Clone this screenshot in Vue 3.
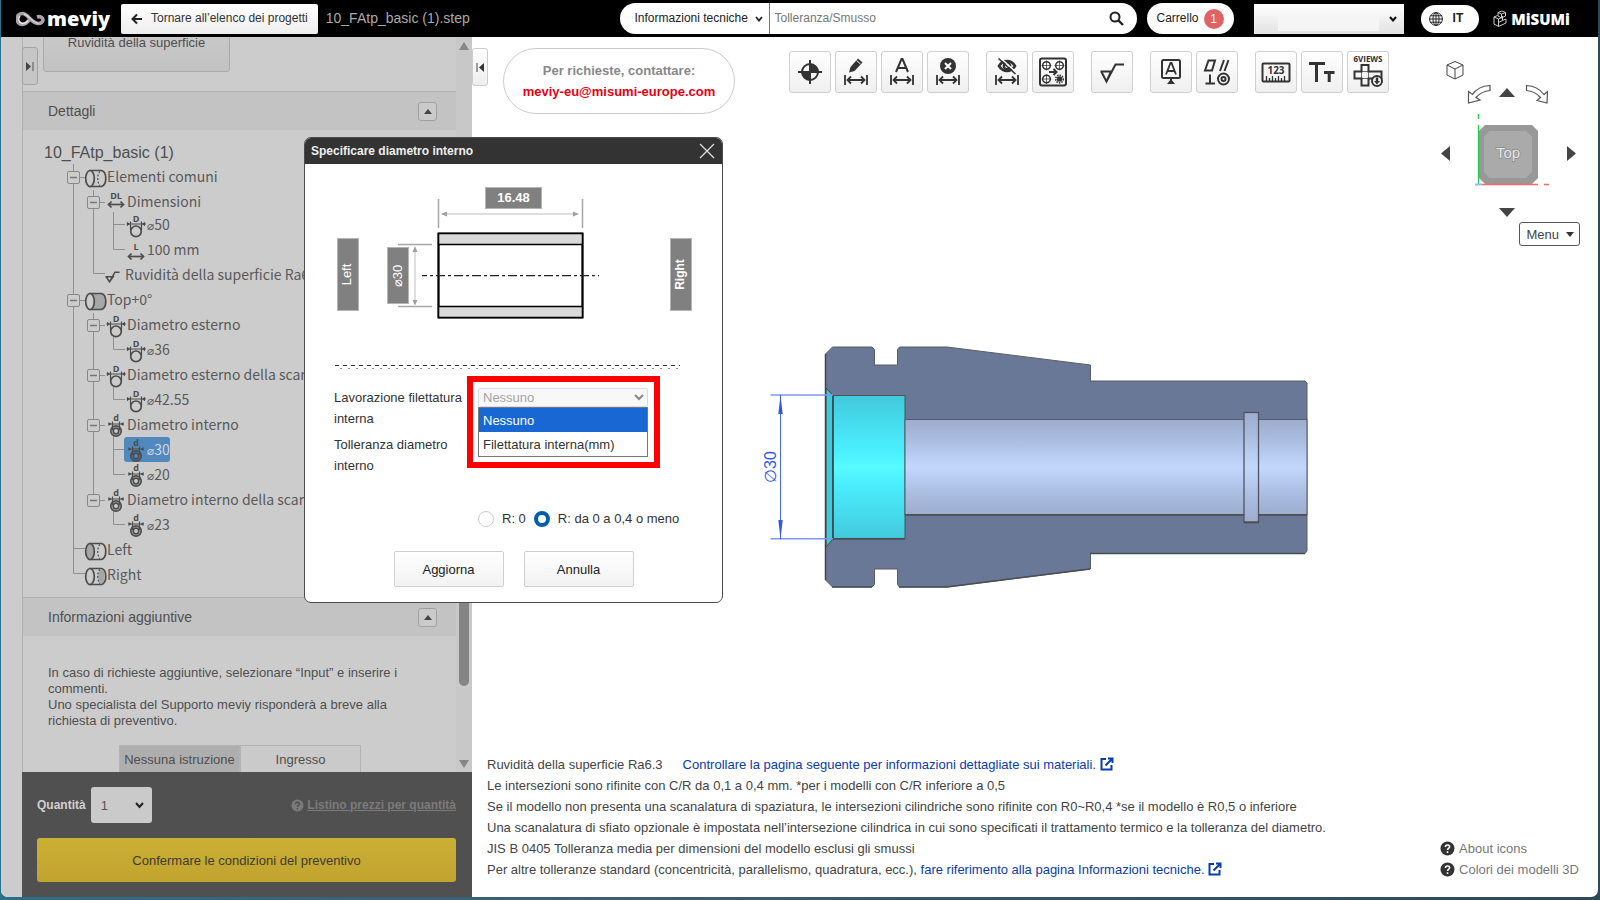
<script setup>
import { ref } from 'vue'

const rows = [
  { level: 1, icon: 'cyl', text: 'Elementi comuni' },
  { level: 2, icon: 'dl', text: 'Dimensioni', tight: true },
  { level: 3, icon: 'D', text: '⌀50' },
  { level: 3, icon: 'L', text: '100 mm' },
  { level: 2, icon: 'rough', text: 'Ruvidità della superficie Ra6.3' },
  { level: 1, icon: 'cyl-body', text: 'Top+0°' },
  { level: 2, icon: 'D', text: 'Diametro esterno' },
  { level: 3, icon: 'D', text: '⌀36' },
  { level: 2, icon: 'D', text: 'Diametro esterno della scanalatura' },
  { level: 3, icon: 'D', text: '⌀42.55' },
  { level: 2, icon: 'd', text: 'Diametro interno' },
  { level: 3, icon: 'd', text: '⌀30', selected: true },
  { level: 3, icon: 'd', text: '⌀20' },
  { level: 2, icon: 'd', text: 'Diametro interno della scanalatura' },
  { level: 3, icon: 'd', text: '⌀23' },
  { level: 1, icon: 'cyl-left', text: 'Left' },
  { level: 1, icon: 'cyl-right', text: 'Right' }
]

const toggles = [[50, 13], [70, 38], [50, 136], [70, 161], [70, 211], [70, 261], [70, 336]]

const toolGroups = [
  [['origin', 'Origine'], ['edit', 'Modifica quota'], ['auto', 'Quota automatica'], ['remove', 'Elimina quota']],
  [['hide', 'Nascondi quote'], ['holes', 'Gruppi di fori']],
  [['rough', 'Rugosità']],
  [['datum', 'Riferimento'], ['gtol', 'Tolleranze geometriche']],
  [['ruler', 'Misura'], ['text', 'Testo'], ['views', 'Sei viste']]
]

const threading = ref('Nessuno')
const options = ['Nessuno', 'Filettatura interna(mm)']
const corner = ref('r04')
const topic = ref('Informazioni tecniche')
const query = ref('')
const account = ref('')
const quantity = ref('1')
</script>

<template>
  <div class="desktop">
    <div class="window">
      <header class="topbar">
        <a class="brand" href="#" aria-label="meviy">
          <svg width="30" height="18" viewBox="0 0 30 18" fill="none">
            <path d="M14 9C11 13 9 14.500 6.500 14.500A5.500 5.500 0 0 1 6.500 3.500C12 3.500 15 13 22 13.500C25 13.600 27 12 27 10C27 7.500 24 6 21 7" stroke="#aaa4a8" stroke-width="3.600" />
            <path d="M12 10.500C10.500 13 9 13.500 6.500 13.500A4.500 4.500 0 0 1 4 6" stroke="#eee" stroke-width="1.300" />
            <path d="M8 4C13 5 16 13 23 13.500" stroke="#d8d4d8" stroke-width="1.300" />
          </svg>
          <span>meviy</span>
        </a>
        <button class="back" type="button">
          <svg width="12" height="12" viewBox="0 0 12 12" fill="none" stroke="#222" stroke-width="2"><path d="M11 6H2M6 1.500L1.500 6L6 10.500" /></svg>
          Tornare all’elenco dei progetti
        </button>
        <span class="filename">10_FAtp_basic (1).step</span>
        <form class="search" role="search" @submit.prevent>
          <span class="topic">
            <select v-model="topic" aria-label="Categoria"><option>Informazioni tecniche</option></select>
            <svg class="chev" width="8" height="6" viewBox="0 0 8 6" fill="none" stroke="#222" stroke-width="1.800"><path d="M1 1L4 4.500L7 1" /></svg>
          </span>
          <input v-model="query" type="text" placeholder="Tolleranza/Smusso" aria-label="Cerca">
          <button type="submit" aria-label="Avvia la ricerca">
            <svg width="15" height="15" viewBox="0 0 15 15" fill="none" stroke="#222"><circle cx="6" cy="6" r="4.500" stroke-width="2" /><path d="M9.500 9.500L14 14" stroke-width="2.400" /></svg>
          </button>
        </form>
        <button class="cart" type="button">Carrello <b>1</b></button>
        <span class="account">
          <select v-model="account" aria-label="Account"><option value=""></option></select>
          <i></i>
          <svg class="chev" width="8" height="6" viewBox="0 0 8 6" fill="none" stroke="#111" stroke-width="2"><path d="M1 1L4 4.500L7 1" /></svg>
        </span>
        <button class="lang" type="button">
          <svg width="14" height="14" viewBox="0 0 14 14" fill="none" stroke="#222" stroke-width="1"><circle cx="7" cy="7" r="6.400" /><ellipse cx="7" cy="7" rx="3" ry="6.400" /><path d="M7 .6V13.400M.6 7H13.400M1.500 3.800H12.500M1.500 10.200H12.500" /></svg>
          IT
        </button>
        <a class="misumi" href="#" aria-label="MiSUMi">
          <svg width="14" height="18" viewBox="0 0 14 18" fill="none" stroke="#ccc" stroke-width="1"><path d="M1 7L5.500 9V16.500L1 14ZM5.500 9L9.500 7M5.500 16.500L13 13V9L9.500 10.500V6M1 7L4.500 5.500M5 2.500L9 1L12.500 2.500L8.500 4ZM5 2.500V6L8.500 8V4M12.500 2.500V6L8.500 8M5.500 12.500L9.500 10.500" /></svg>
          <span>MiSUMi</span>
        </a>
      </header>

      <main class="body">
        <aside class="sidebar">
          <button class="fold" type="button" aria-label="Espandi il pannello"><svg width="8" height="9" viewBox="0 0 8 9"><path d="M0 0L5 4.500L0 9Z" fill="#444" /><path d="M7 0V9" stroke="#555" /></svg></button>
          <div class="scroller">
            <div class="content">
              <button class="panel-btn" type="button">Ruvidità della superficie</button>
              <section>
                <h2>Dettagli <button type="button" aria-label="Comprimi dettagli"><svg width="8" height="5" viewBox="0 0 8 5"><path d="M4 0L8 5H0Z" fill="#444" /></svg></button></h2>
                <div class="tree">
                  <p class="root">10_FAtp_basic (1)</p>
                  <div class="nodes">
                    <svg class="wires" width="160" height="425" viewBox="0 0 160 425" fill="none" stroke="#8f8f8f">
                      <path d="M50.500 0V409.500H62M50.500 384.500H62M50.500 13.500H62M50.500 136.500H62M70.500 26V109.500H82M70.500 38.500H82M70.500 149V336.500H82M70.500 161.500H82M70.500 211.500H82M70.500 261.500H82M90.500 48V85.500H102M90.500 60.500H102M90.500 172V185.500H102M90.500 222V235.500H102M90.500 272V310.500H102M90.500 285.500H102M90.500 347V360.500H102" />
                      <g v-for="(t, i) in toggles" :key="i">
                        <rect :x="t[0] - 5.5" :y="t[1] - 5.5" width="12" height="12" rx="1.500" fill="#ccc" stroke="#888" />
                        <path :d="`M${t[0] - 3} ${t[1] + 0.5}h7`" stroke="#777" stroke-width="1.500" />
                      </g>
                    </svg>
                    <ul>
                      <li v-for="(r, i) in rows" :key="i" :class="['lv' + r.level, { tight: r.tight }]">
                        <span class="node" :class="{ selected: r.selected, short: r.icon === 'rough' }">
                          <svg width="23" height="25" viewBox="0 0 23 25" fill="none" stroke="#4c4c4c" stroke-width="1.700">
                            <template v-if="r.icon.startsWith('cyl')">
                              <path d="M6 6.500H17.500C23.200 8 23.200 21 17.500 22.500H6Z" :fill="r.icon === 'cyl-body' ? '#a6a6a6' : 'none'" />
                              <path v-if="r.icon === 'cyl-right'" d="M17 7.300H18C21.500 9.500 21.500 19.500 18 21.700H16.500C13.500 19 13.500 10 17 7.300Z" fill="#a6a6a6" stroke="none" />
                              <ellipse cx="6" cy="14.500" rx="4.300" ry="8" :fill="r.icon === 'cyl-left' ? '#a6a6a6' : '#ccc'" />
                              <path v-if="r.icon !== 'cyl-body'" d="M16 7.500C13 10 13 19 16 21.500" stroke-width="1.200" stroke-dasharray="2 1.500" />
                            </template>
                            <template v-else-if="r.icon === 'D'">
                              <path d="M2.500 12H22M6.500 9.500V18M17.500 9.500V18" stroke-width="1.200" />
                              <path d="M3 9.800L6 12L3 14.200ZM21 9.800L18 12L21 14.200Z" fill="#4c4c4c" stroke="none" />
                              <circle cx="12" cy="19.300" r="5.300" />
                              <text x="12" y="9.500" text-anchor="middle">D</text>
                            </template>
                            <template v-else-if="r.icon === 'd'">
                              <path d="M4 12H20M8.500 9.500V18M15.500 9.500V18" stroke-width="1.200" />
                              <path d="M4.500 10L7.500 12L4.500 14ZM19.500 10L16.500 12L19.500 14Z" fill="#4c4c4c" stroke="none" />
                              <circle cx="12" cy="19" r="5.200" /><circle cx="12" cy="19" r="2.800" />
                              <text x="12" y="9" text-anchor="middle">d</text>
                            </template>
                            <template v-else-if="r.icon === 'rough'"><path d="M1.500 15H10L6 20.500L2.500 15M6 20.500L12 10H17" /></template>
                            <template v-else>
                              <path d="M5 15.500H19" :transform="r.icon === 'L' ? 'translate(0 4)' : null" />
                              <path d="M7.500 12.500L4.500 15.500L7.500 18.500M16.500 12.500L19.500 15.500L16.500 18.500" :transform="r.icon === 'L' ? 'translate(0 4)' : null" />
                              <text x="12" :y="r.icon === 'L' ? 13 : 10" text-anchor="middle">{{ r.icon.toUpperCase() }}</text>
                            </template>
                          </svg>
                          <span v-if="r.text[0] === '⌀'"><small>⌀</small>{{ r.text.slice(1) }}</span>
                          <span v-else>{{ r.text }}</span>
                        </span>
                      </li>
                    </ul>
                  </div>
                </div>
              </section>
              <section>
                <h2>Informazioni aggiuntive <button type="button" aria-label="Comprimi informazioni"><svg width="8" height="5" viewBox="0 0 8 5"><path d="M4 0L8 5H0Z" fill="#444" /></svg></button></h2>
                <p class="extra">In caso di richieste aggiuntive, selezionare “Input” e inserire i commenti.<br>Uno specialista del Supporto meviy risponderà a breve alla richiesta di preventivo.</p>
                <div class="segmented"><button class="on" type="button">Nessuna istruzione</button><button type="button">Ingresso</button></div>
              </section>
            </div>
            <div class="scrollbar">
              <svg width="10" height="8" viewBox="0 0 10 8"><path d="M5 0L10 8H0Z" fill="#858585" /></svg>
              <span></span>
              <svg width="10" height="8" viewBox="0 0 10 8"><path d="M5 8L10 0H0Z" fill="#858585" /></svg>
            </div>
          </div>
          <footer class="order">
            <div class="order-row">
              <label for="qty">Quantità</label>
              <span class="qty"><select id="qty" v-model="quantity"><option>1</option><option>2</option></select>
                <svg class="chev" width="9" height="7" viewBox="0 0 9 7" fill="none" stroke="#222" stroke-width="2"><path d="M1 1L4.500 5L8 1" /></svg></span>
              <a href="#"><svg width="13" height="13" viewBox="0 0 13 13"><circle cx="6.500" cy="6.500" r="6" fill="#7b7b7b" /><path d="M4.600 5.200C4.600 2.600 8.500 2.700 8.400 5C8.300 6.500 6.500 6.400 6.500 8M6.500 9V10.500" fill="none" stroke="#505050" stroke-width="1.500" /></svg><u>Listino prezzi per quantità</u></a>
            </div>
            <button class="confirm" type="button">Confermare le condizioni del preventivo</button>
          </footer>
        </aside>

        <section class="viewer">
          <div class="stage">
            <svg width="560" height="250" viewBox="755 342 560 250" role="img" aria-label="Sezione del modello">
              <defs>
                <linearGradient id="cy" x1="0" y1="0" x2="0" y2="1"><stop offset="0" stop-color="#42c9da" /><stop offset=".15" stop-color="#45d8ea" /><stop offset=".4" stop-color="#4bf0ff" /><stop offset=".5" stop-color="#57fbff" /><stop offset=".6" stop-color="#4bf0ff" /><stop offset=".85" stop-color="#45d8ea" /><stop offset="1" stop-color="#42c9da" /></linearGradient>
                <linearGradient id="bo" x1="0" y1="0" x2="0" y2="1"><stop offset="0" stop-color="#9dadce" /><stop offset=".2" stop-color="#a9bbdf" /><stop offset=".5" stop-color="#c3d7fd" /><stop offset=".8" stop-color="#a9bbdf" /><stop offset="1" stop-color="#9dadce" /></linearGradient>
              </defs>
              <path d="M825.500 354L832.500 347H872L874.500 349.500V365H897.500V349.500L899.500 347H947L1090.500 365V381H1305L1307 383V551L1305 553.500H1090.500V569L947 587H899.500L897.500 584.500V569H874.500V584.500L872 587H832.500L825.500 580Z" fill="#687896" stroke="#5a5d63" />
              <path d="M826 388L833 395.500V539L826 547Z" fill="#3bcbdc" stroke="#444" />
              <rect x="833" y="395.500" width="72" height="143" fill="url(#cy)" stroke="#4b5358" />
              <rect x="905" y="419.500" width="402" height="95" fill="url(#bo)" stroke="#555b68" />
              <rect x="1244" y="412.500" width="14.500" height="109.500" fill="url(#bo)" stroke="#4f5361" stroke-width="1.300" />
              <path d="M833 395V539M825.500 354V580" stroke="#40454a" stroke-width="1.500" />
              <path d="M905 515H1244M1258 515H1307M833 539H905M1244 522.500H1259M899 587H947L1090 569M832 587H872M1090 553.500H1305" fill="none" stroke="#4a4d52" stroke-width="1.500" />
              <path d="M770.500 395H833M770.500 538.800H833" stroke="#8196f5" stroke-width="1.600" />
              <path d="M780.500 395V539" stroke="#4a67ef" />
              <path d="M780.500 395L782.700 414H778.300ZM780.500 539L782.700 520H778.300Z" fill="#3258ee" />
              <text transform="translate(776 467) rotate(-90)" text-anchor="middle" font-size="16" fill="#3258ee">∅30</text>
            </svg>
          </div>

          <div class="viewer-top">
            <button class="collapse" type="button" aria-label="Comprimi il pannello"><svg width="8" height="9" viewBox="0 0 8 9"><path d="M8 0L3 4.500L8 9Z" fill="#333" /><path d="M1 0V9" stroke="#444" /></svg></button>
            <p class="contact">Per richieste, contattare:<a href="#">meviy-eu@misumi-europe.com</a></p>
            <div class="toolbar" role="toolbar">
              <div v-for="(g, gi) in toolGroups" :key="gi" class="tools">
                <button v-for="t in g" :key="t[0]" type="button" :aria-label="t[1]">
                  <svg width="40" height="40" viewBox="0 0 40 40" fill="none" stroke="#333" stroke-width="2">
                    <template v-if="t[0] === 'origin'">
                      <circle cx="20" cy="20" r="8" /><path d="M20 20V12A8 8 0 0 0 12 20ZM20 20V28A8 8 0 0 0 28 20Z" fill="#333" stroke="none" transform="translate(40 0) scale(-1 1)" /><path d="M20 8V32M8 20H32" />
                    </template>
                    <template v-else-if="['edit', 'auto', 'remove', 'hide'].includes(t[0])">
                      <path d="M9 23V33M31 23V33M12 28H28M15 24.500L11.500 28L15 31.500M25 24.500L28.500 28L25 31.500" stroke-width="1.800" />
                      <g v-if="t[0] === 'edit'"><path d="M13 20.500L14.500 15L22 6.500L26.500 10.500L18.500 19Z" fill="#333" stroke="none" /><path d="M20.500 8.500L24.500 12" stroke="#fff" stroke-width="1" /></g>
                      <path v-else-if="t[0] === 'auto'" d="M14 20L19.500 7H20.500L26 20M16 16H24" />
                      <g v-else-if="t[0] === 'remove'"><circle cx="20" cy="14" r="8" fill="#333" stroke="none" /><path d="M17 11L23 17M23 11L17 17" stroke="#fff" /></g>
                      <g v-else><path d="M12 14C16 7.500 24 7.500 28 14C24 20.500 16 20.500 12 14Z" stroke-width="2.600" /><circle cx="20" cy="14" r="3.200" stroke-width="2.400" /><path d="M13 5.500L30 21" stroke="#fff" stroke-width="1.500" /><path d="M11.500 6.500L28.500 22" stroke-width="1.600" /></g>
                    </template>
                    <template v-else-if="t[0] === 'holes'">
                      <rect x="7" y="6.500" width="26" height="27" rx="2" /><g stroke-width="1.500"><circle cx="13.500" cy="13.500" r="3.800" /><circle cx="26.500" cy="13.500" r="3.800" /><circle cx="13.500" cy="27" r="3.800" /><circle cx="26.500" cy="27" r="3.800" stroke-dasharray="1.500 1" /><circle cx="26.500" cy="27" r="2" fill="#333" /></g><path d="M8.500 13.500H18.500M21.500 13.500H31.500M13.500 8.500V18.500M26.500 8.500V18.500M8.500 27H18.500M13.500 22V32" stroke-width=".7" /><path d="M16 20H23M20.500 17L23.500 20L20.500 23" />
                    </template>
                    <path v-else-if="t[0] === 'rough'" d="M8.500 19.500H19L14.500 29.500L9.500 20M14.500 29.500L23.500 12.500H32" />
                    <template v-else-if="t[0] === 'datum'">
                      <rect x="11" y="8" width="18" height="18" rx="1.500" /><path d="M15 22.500L19.500 11H20.500L25 22.500M16.500 19H23.500" stroke-width="1.800" /><path d="M20 26V30" /><path d="M20 27L24 32H16Z" fill="#333" stroke="none" />
                    </template>
                    <template v-else-if="t[0] === 'gtol'">
                      <path d="M8 18.500L11.500 8.500H18L15 18.500ZM23 19L27 8M27.500 19L31.500 8M8.500 31.500H18M13 31V22.500" /><circle cx="26.500" cy="27" r="5.500" /><circle cx="26.500" cy="27" r="2" />
                    </template>
                    <template v-else-if="t[0] === 'ruler'">
                      <rect x="6.500" y="11.500" width="27" height="18" rx="1" /><path d="M10.500 29V24M13.500 29V26M16.500 29V24M19.500 29V26M22.500 29V24M25.500 29V26M28.500 29V24" stroke-width="1.300" /><text x="20" y="22" font-size="10" text-anchor="middle" class="lbl">123</text>
                    </template>
                    <template v-else-if="t[0] === 'text'"><path d="M7 11.500H23M14.500 11.500V30" stroke-width="3" /><path d="M22 20.500H32.500M27.200 20.500V30" stroke-width="3" /></template>
                    <template v-else>
                      <text x="20" y="10" font-size="8" text-anchor="middle" class="lbl">6VIEWS</text>
                      <path d="M13.500 19.500H20.500V26.500H13.500Z" stroke-width=".7" />
                      <path d="M13.500 13H20.500V19.500H33.500V26.500H20.500V33.500H13.500V26.500H6.500V19.500H13.500Z" stroke-width="2" />
                      <circle cx="29" cy="29" r="5" fill="#f4f4f4" /><path d="M29 32.500L26 29H27.800V25.500H30.200V29H32Z" fill="#333" stroke="none" />
                    </template>
                  </svg>
                </button>
              </div>
            </div>
            <div class="navigator">
              <div class="cube-pad">
                <svg width="140" height="160" viewBox="1440 60 140 160" fill="none">
                  <path d="M1455 61.500L1463 65V75L1455 79L1447 75V65ZM1447 65L1455 69L1463 65M1455 69V79" stroke="#444" />
                  <path d="M1490 85.500C1482 86 1476 89 1472.500 94.500L1468.500 91.500V103L1480 100L1476 97.500C1479 94 1484 91 1490 90.500ZM1526.500 85.500C1534.500 86 1540 89 1544 94.500L1547.500 91.500L1547 103L1537 100.500L1540.500 97.500C1537 93.500 1533 91 1526.500 90.500Z" stroke="#555" stroke-width="1.200" />
                  <path d="M1485 125H1532L1538 131V178L1532 184H1485L1479 178V131Z" fill="#989898" />
                  <path d="M1489 131H1526L1532 137V172L1526 178H1489L1484 172V137Z" fill="#aaa" />
                  <text x="1508" y="157.500" text-anchor="middle" font-size="15" fill="#e6e6e6" stroke="#8a8a8a" stroke-width="1.500" paint-order="stroke">Top</text>
                  <path d="M1478.500 114V119M1478.500 125V184" stroke="#24cc4c" stroke-width="1.300" />
                  <path d="M1482 184.500H1538M1544 184.500H1549" stroke="#f26a6a" stroke-width="1.500" /><path d="M1475 184.500H1482" stroke="#8fbdf5" stroke-width="2" />
                </svg>
                <button class="up" type="button" aria-label="Su"></button>
                <button class="left" type="button" aria-label="Sinistra"></button>
                <button class="right" type="button" aria-label="Destra"></button>
                <button class="down" type="button" aria-label="Giù"></button>
              </div>
              <button class="menu" type="button">Menu <svg width="8" height="5" viewBox="0 0 8 5"><path d="M0 0H8L4 5Z" fill="#333" /></svg></button>
            </div>
          </div>

          <div class="viewer-bottom">
            <div class="notes">
              <p><span class="ra">Ruvidità della superficie Ra6.3</span><a href="#">Controllare la pagina seguente per informazioni dettagliate sui materiali. <svg width="14" height="14" viewBox="0 0 14 14" fill="none" stroke="#0a3cab" stroke-width="2"><path d="M6 2H1.500V12.500H11.500V8M8 1.500H12.500V6M12.500 1.500L5.500 8.500" /></svg></a></p>
              <p>Le intersezioni sono rifinite con C/R da 0,1 a 0,4 mm. *per i modelli con C/R inferiore a 0,5</p>
              <p>Se il modello non presenta una scanalatura di spaziatura, le intersezioni cilindriche sono rifinite con R0~R0,4 *se il modello è R0,5 o inferiore</p>
              <p>Una scanalatura di sfiato opzionale è impostata nell’intersezione cilindrica in cui sono specificati il trattamento termico e la tolleranza del diametro.</p>
              <p>JIS B 0405 Tolleranza media per dimensioni del modello esclusi gli smussi</p>
              <p>Per altre tolleranze standard (concentricità, parallelismo, quadratura, ecc.), <a href="#">fare riferimento alla pagina Informazioni tecniche. <svg width="14" height="14" viewBox="0 0 14 14" fill="none" stroke="#0a3cab" stroke-width="2"><path d="M6 2H1.500V12.500H11.500V8M8 1.500H12.500V6M12.500 1.500L5.500 8.500" /></svg></a></p>
            </div>
            <nav class="help">
              <a v-for="h in ['About icons', 'Colori dei modelli 3D']" :key="h" href="#"><svg width="15" height="15" viewBox="0 0 15 15"><circle cx="7.500" cy="7.500" r="7" fill="#333" /><path d="M5.400 6C5.400 3.300 9.700 3.300 9.600 5.800C9.500 7.400 7.500 7.200 7.500 9M7.500 10.200V12" fill="none" stroke="#fff" stroke-width="1.600" /></svg>{{ h }}</a>
            </nav>
          </div>
        </section>
      </main>

      <div class="dialog" role="dialog" aria-labelledby="dlg-title">
        <div class="dialog-head">
          <h1 id="dlg-title">Specificare diametro interno</h1>
          <button type="button" aria-label="Chiudi"><svg width="16" height="16" viewBox="0 0 16 16" stroke="#ddd" stroke-width="1.300"><path d="M1 1L15 15M15 1L1 15" /></svg></button>
        </div>
        <svg class="diagram" viewBox="305 164 417 210" fill="none">
          <path d="M438.500 199V228M582.500 199V228M398 244.500H432M398 306.500H432" stroke="#a6a6a6" stroke-width="1.500" />
          <path d="M442 214H578M415 248V304" stroke="#d4d4d4" stroke-width="1.500" />
          <path d="M441 214L447 211.500V216.500ZM579 214L573 211.500V216.500ZM415 246L412.500 252H417.500ZM415 305.500L412.500 300H417.500Z" fill="#a0a0a0" />
          <rect x="438.500" y="233.500" width="144" height="84" fill="#fff" stroke="#000" stroke-width="2" />
          <path d="M439 234H582V244.500H439ZM439 306.500H582V317H439Z" fill="#d9d9d9" />
          <path d="M438 233.500H583M438 244.500H583M438 306.500H583M438 317.500H583M438.500 233V318M582.500 233V318" stroke="#000" stroke-width="1.600" />
          <path d="M422 275.700H599" stroke="#222" stroke-width="1.200" stroke-dasharray="9 3 3 3" stroke-dashoffset="4" />
          <g fill="#808080" stroke="#b5b5b5"><rect x="485.500" y="187.500" width="56" height="21" /><rect x="337.500" y="238.500" width="21" height="72" /><rect x="387.500" y="247.500" width="21" height="56" /><rect x="670.500" y="238.500" width="21" height="72" /></g>
          <g fill="#fff" font-size="13" text-anchor="middle">
            <text x="513.500" y="201.500" font-weight="700">16.48</text>
            <text transform="translate(351 274.500) rotate(-90)">Left</text>
            <text transform="translate(402 276) rotate(-90)">⌀30</text>
            <text transform="translate(684 274.500) rotate(-90)" font-size="12" font-weight="700">Right</text>
          </g>
          <path d="M335 365.500H680" stroke="#333" stroke-dasharray="4 4" /><path d="M340 368.500H680" stroke="#888" stroke-dasharray="2 6" />
        </svg>
        <div class="fields">
          <label for="thread">Lavorazione filettatura interna</label>
          <div class="combo">
            <select id="thread" v-model="threading"><option v-for="o in options" :key="o">{{ o }}</option></select>
            <svg class="chev" width="10" height="7" viewBox="0 0 10 7" fill="none" stroke="#888" stroke-width="2"><path d="M1 1L5 5L9 1" /></svg>
            <ul role="listbox" aria-label="Lavorazione filettatura interna">
              <li v-for="o in options" :key="o" role="option" :aria-selected="o === threading" :class="{ active: o === threading }" @click="threading = o">{{ o }}</li>
            </ul>
            <div class="highlight"></div>
          </div>
          <span>Tolleranza diametro interno</span>
        </div>
        <div class="radios">
          <label><input v-model="corner" type="radio" name="corner" value="r0">R: 0</label>
          <label><input v-model="corner" type="radio" name="corner" value="r04">R: da 0 a 0,4 o meno</label>
        </div>
        <div class="actions"><button type="button">Aggiorna</button><button type="button">Annulla</button></div>
      </div>
    </div>
  </div>
</template>

<style>
body { margin: 0; }
</style>

<style scoped>
* { box-sizing: border-box; }
.desktop { height: 100vh; padding: 0 2px 3px 1px; background: linear-gradient(90deg, #2b6f88, #3f5b6e 40%, #2f4a55); font: 13px/21px "Liberation Sans", Arial, sans-serif; color: #444; }
.window { position: relative; display: flex; flex-direction: column; height: 100%; background: #fff; border-radius: 0 0 7px 7px; overflow: hidden; }
button, select, input { font: inherit; color: inherit; margin: 0; }
button { padding: 0; border: 0; background: none; cursor: pointer; }
p, h1, h2, ul { margin: 0; padding: 0; }
ul { list-style: none; }
a { text-decoration: none; color: #0a3cab; }
select { appearance: none; border: 0; background: transparent; outline: 0; }
svg { flex: none; display: block; }
.chev { position: absolute; pointer-events: none; }

.topbar { display: flex; align-items: center; flex: none; height: 37px; padding: 0 28px 0 15px; background: #000; font-size: 12px; }
.brand { display: flex; align-items: center; gap: 1px; width: 105px; color: #fff; font: 800 20px/30px "Open Sans", sans-serif; }
.back { display: flex; align-items: center; gap: 8px; height: 30px; padding: 0 10px; background: linear-gradient(#fff, #eee); border-radius: 2px; color: #333; white-space: nowrap; }
.filename { margin-left: 8px; color: #aaa; font-size: 14px; white-space: nowrap; }
.search { display: flex; width: 517px; height: 31px; margin-left: auto; background: #fff; border-radius: 16px; overflow: hidden; }
.topic { position: relative; display: flex; width: 150px; border-right: 1px solid #777; }
.topic select { width: 100%; padding: 0 0 0 15px; color: #222; }
.topic .chev { right: 6px; top: 13px; }
.search input { flex: 1; min-width: 0; border: 0; outline: 0; padding: 0 5px; background: transparent; }
.search input::placeholder { color: #777; opacity: 1; }
.search button { width: 40px; display: grid; place-items: center; }
.cart { display: flex; align-items: center; gap: 5px; height: 31px; margin-left: 10px; padding: 0 10px; border-radius: 16px; background: #fff; color: #222; }
.cart b { width: 20px; height: 20px; border-radius: 50%; background: #e06363; color: #fff; font-weight: 400; line-height: 20px; }
.account { position: relative; width: 150px; height: 30px; margin-left: 20px; background: linear-gradient(#fff, #e2e2e2); }
.account select { width: 100%; height: 100%; }
.account i { position: absolute; left: 24px; top: 9px; width: 101px; height: 18px; background: #f5f5f5; }
.account .chev { right: 7px; top: 12px; }
.lang { display: flex; align-items: center; gap: 10px; height: 28px; margin-left: 17px; padding: 0 16px 0 8px; border-radius: 15px; background: #fff; color: #222; font-weight: 700; }
.misumi { display: flex; align-items: center; gap: 4px; margin-left: 14px; color: #fff; font: 800 15px/20px "Open Sans", sans-serif; }

.body { display: flex; flex: 1; min-height: 0; }
.sidebar { position: relative; display: flex; flex-direction: column; flex: 0 0 471px; padding-left: 21px; background: #ccc; color: #4f4f4f; }
.fold { position: absolute; left: 21px; top: 10px; z-index: 1; width: 16px; height: 38px; display: grid; place-items: center; border: 1px solid #a3a3a3; border-radius: 3px; background: #c6c6c6; }
.scroller { display: flex; flex: 1; min-height: 0; overflow: hidden; border-left: 1px solid #b0b0b0; }
.content { flex: 1; min-width: 0; }
.panel-btn { display: block; width: 187px; height: 59px; margin: -24px 0 19px 20px; border: 1px solid #aaa; border-radius: 3px; background: linear-gradient(#ccc, #c2c2c2); }
h2 { display: flex; align-items: center; justify-content: space-between; height: 39px; padding: 0 19px 0 25px; border-top: 1px solid #b0b0b0; background: #c3c3c3; font-size: 14px; font-weight: 400; }
h2 button { width: 19px; height: 19px; display: grid; place-items: center; border: 1px solid #a0a0a0; border-radius: 3px; background: #cacaca; }
.tree { padding: 10px 0; overflow: hidden; }
.root { height: 24px; padding-left: 21px; font-size: 16px; line-height: 25px; }
.nodes { position: relative; font: 14px/25px "Noto Sans CJK SC", sans-serif; color: #595959; }
.wires { position: absolute; left: 0; top: 0; }
.nodes ul { position: relative; }
.nodes li { display: flex; height: 25px; white-space: nowrap; }
.nodes li.tight { height: 23px; }
.lv1 { padding-left: 61px; }
.lv2 { padding-left: 81px; }
.lv3 { padding-left: 101px; }
.node { display: flex; height: 25px; line-height: 24px; }
.node svg { overflow: visible; }
.node.short svg { width: 21px; }
.node text { font: 700 9px "Open Sans", sans-serif; fill: #4c4c4c; stroke: none; }
.node small { font: 12px "DejaVu Sans", sans-serif; }
.node.selected { background: #5189bf; border-radius: 3px; color: #d0d8e0; }
.extra { padding: 29px 30px 16px 25px; font-size: 13px; line-height: 16px; }
.segmented { display: flex; width: 242px; margin-left: 96px; }
.segmented button { flex: 1; height: 36px; padding-bottom: 8px; border: 1px solid #b3b3b3; background: #cacaca; white-space: nowrap; }
.segmented .on { background: #aeaeae; }
.scrollbar { display: flex; flex-direction: column; align-items: center; width: 16px; padding: 5px 0 4px; background: #c8c8c8; }
.scrollbar span { width: 10px; flex: 1; margin: 110px 0 74px; border-radius: 5px; background: #858585; }
.order { flex: none; padding: 15px 16px 15px 15px; background: #505050; }
.order-row { display: flex; align-items: center; font-weight: 700; font-size: 12px; color: #d0d0d0; }
.qty { position: relative; width: 61px; height: 36px; margin-left: 5px; border-radius: 3px; background: #cacaca; color: #555; font-weight: 400; }
.qty select { width: 100%; height: 100%; padding-left: 10px; font-size: 13px; }
.qty .chev { right: 8px; top: 15px; }
.order-row a { display: flex; align-items: center; gap: 3px; margin-left: auto; color: #7b7b7b; }
.confirm { display: block; width: 100%; height: 44px; margin-top: 15px; border-radius: 3px; background: linear-gradient(#ccb035, #c1a32f); color: #3c3c30; }

.viewer { position: relative; display: flex; flex-direction: column; justify-content: space-between; flex: 1; min-width: 0; }
.stage { position: absolute; inset: 0; display: grid; place-items: center; }
.viewer-top { position: relative; display: flex; align-items: flex-start; padding: 11px 18px 0 0; }
.collapse { width: 16px; height: 38px; display: grid; place-items: center; border: 1px solid #ccc; border-radius: 3px; background: linear-gradient(#fff, #eee); }
.contact { width: 232px; height: 66px; margin-left: 15px; padding-top: 11px; border: 1px solid #ccc; border-radius: 33px; text-align: center; font-size: 13px; font-weight: 700; color: #888; }
.contact a { display: block; color: #e60012; }
.toolbar { display: flex; gap: 17px; margin: 3px 0 0 54px; }
.tools { display: flex; gap: 4px; }
.tools button { width: 42px; height: 42px; border: 1px solid #d0d0d0; border-radius: 3px; background: linear-gradient(#fff, #efefef); }
.lbl { font-family: "Open Sans", sans-serif; font-weight: 700; fill: #333; stroke: none; }
.navigator { display: flex; flex-direction: column; align-items: flex-end; margin: 12px 0 0 auto; }
.cube-pad { position: relative; }
.cube-pad button { position: absolute; width: 16px; height: 9px; background: #444; }
.cube-pad .up { left: 59px; top: 28px; clip-path: polygon(50% 0, 100% 100%, 0 100%); }
.cube-pad .down { left: 59px; top: 148px; clip-path: polygon(0 0, 100% 0, 50% 100%); }
.cube-pad .left { left: 1px; top: 86px; width: 9px; height: 15px; clip-path: polygon(0 50%, 100% 0, 100% 100%); }
.cube-pad .right { left: 127px; top: 86px; width: 9px; height: 15px; clip-path: polygon(0 0, 100% 50%, 0 100%); }
.menu { display: flex; align-items: center; gap: 7px; height: 24px; margin-top: 2px; padding: 0 5px 0 6px; border: 1px solid #555; border-radius: 3px; background: #fff; }
.viewer-bottom { position: relative; display: flex; justify-content: space-between; align-items: flex-end; padding: 0 19px 17px 15px; }
.notes p { white-space: nowrap; }
.notes svg { display: inline-block; vertical-align: -2px; }
.ra { margin-right: 20px; }
.help { display: flex; flex-direction: column; }
.help a { display: flex; align-items: center; gap: 4px; color: #777; white-space: nowrap; }

.dialog { position: absolute; left: 303px; top: 137px; width: 419px; background: #fff; border: 1px solid #4c4c4c; border-radius: 7px; overflow: hidden; padding-bottom: 15px; color: #333; }
.dialog-head { display: flex; align-items: center; justify-content: space-between; height: 26px; padding: 0 7px 0 6px; background: #333; color: #eee; }
h1 { font-size: 12px; }
.diagram { width: 100%; }
.fields { display: grid; grid-template-columns: 130px 170px; column-gap: 14px; row-gap: 5px; padding: 13px 0 0 29px; }
.combo { position: relative; height: 19px; margin-top: 1px; }
.combo select { display: block; width: 100%; height: 19px; padding: 0 4px; border: 1px solid #d5dbf5; border-radius: 2px; background: #f8f8f8; color: #a3a3a3; line-height: 17px; }
.combo .chev { right: 4px; top: 6px; }
.combo ul { position: absolute; left: 0; top: 19px; width: 100%; border: 1px solid #777; background: #fff; }
.combo li { height: 24px; padding: 0 4px; line-height: 25px; }
.combo .active { background: #1967d2; color: #fff; }
.highlight { position: absolute; inset: -12px -12px -61px -11px; border: 6px solid #f00; pointer-events: none; }
.radios { display: flex; gap: 8px; padding: 32px 0 0 173px; }
.radios label { display: flex; align-items: center; gap: 8px; white-space: nowrap; }
.radios input { appearance: none; width: 16px; height: 16px; margin: 0; border: 1px solid #ccc; border-radius: 50%; background: #fff; }
.radios input:checked { border: 4px solid #005fad; }
.actions { display: flex; gap: 20px; justify-content: center; padding: 22px 0 0; }
.actions button { width: 110px; height: 36px; border: 1px solid #d0d0d0; border-radius: 2px; background: linear-gradient(#fff, #f2f2f2); color: #222; }
</style>
